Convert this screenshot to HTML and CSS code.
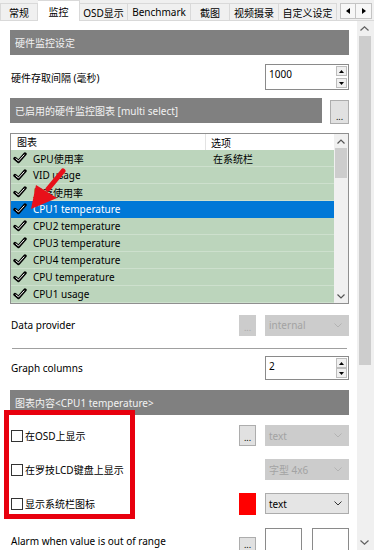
FILE: index.html
```html
<!DOCTYPE html>
<html>
<head>
<meta charset="utf-8">
<title>监控</title>
<link rel="stylesheet" href="styles.css">
</head>
<body>
<div class="window">
  <div class="tabs">
    <div class="tab first w1">常规</div>
    <div class="tab active w2">监控</div>
    <div class="tab w3">OSD显示</div>
    <div class="tab w4">Benchmark</div>
    <div class="tab w5">截图</div>
    <div class="tab w6">视频摄录</div>
    <div class="tab w7">自定义设定</div>
    <div class="tabnav">
      <span class="navbtn"><svg width="4" height="6"><path d="M4 0L0 3L4 6z"/></svg></span>
      <span class="navbtn"><svg width="4" height="6"><path d="M0 0L4 3L0 6z"/></svg></span>
    </div>
  </div>

  <div class="body">
    <div class="panel">
      <div class="group">硬件监控设定</div>

      <div class="row r-interval">
        <span class="label">硬件存取间隔 (毫秒)</span>
        <div class="spin big">
          <span class="val">1000</span>
          <div class="spinbtns">
            <span class="sbtn"><svg width="5" height="3"><path d="M0 3L2.5 0L5 3z"/></svg></span>
            <span class="sbtn"><svg width="5" height="3"><path d="M0 0L2.5 3L5 0z"/></svg></span>
          </div>
        </div>
      </div>

      <div class="row r-charts">
        <div class="group grow">已启用的硬件监控图表 [multi select]</div>
        <span class="btn tallbtn">...</span>
      </div>

      <div class="list">
        <div class="list-main">
          <div class="lhead"><span class="c1">图表</span><span class="c2">选项</span></div>
          <div class="item"><svg class="chk" width="14" height="12"><path d="M2 6.5L5.5 9.5L12 2" fill="none" stroke="#000" stroke-width="3.4" stroke-linejoin="round" stroke-linecap="round"/><path d="M2.6 6.6L5.5 9L11.4 2.6" fill="none" stroke="#fff" stroke-width="1"/></svg><span class="c1">GPU使用率</span><span class="c2">在系统栏</span></div>
          <div class="item"><svg class="chk" width="14" height="12"><path d="M2 6.5L5.5 9.5L12 2" fill="none" stroke="#000" stroke-width="3.4" stroke-linejoin="round" stroke-linecap="round"/><path d="M2.6 6.6L5.5 9L11.4 2.6" fill="none" stroke="#fff" stroke-width="1"/></svg><span class="c1">VID usage</span></div>
          <div class="item"><svg class="chk" width="14" height="12"><path d="M2 6.5L5.5 9.5L12 2" fill="none" stroke="#000" stroke-width="3.4" stroke-linejoin="round" stroke-linecap="round"/><path d="M2.6 6.6L5.5 9L11.4 2.6" fill="none" stroke="#fff" stroke-width="1"/></svg><span class="c1">显存使用率</span></div>
          <div class="item selected"><svg class="chk" width="14" height="12"><path d="M2 6.5L5.5 9.5L12 2" fill="none" stroke="#000" stroke-width="3.4" stroke-linejoin="round" stroke-linecap="round"/><path d="M2.6 6.6L5.5 9L11.4 2.6" fill="none" stroke="#fff" stroke-width="1"/></svg><span class="c1">CPU1 temperature</span></div>
          <div class="item"><svg class="chk" width="14" height="12"><path d="M2 6.5L5.5 9.5L12 2" fill="none" stroke="#000" stroke-width="3.4" stroke-linejoin="round" stroke-linecap="round"/><path d="M2.6 6.6L5.5 9L11.4 2.6" fill="none" stroke="#fff" stroke-width="1"/></svg><span class="c1">CPU2 temperature</span></div>
          <div class="item"><svg class="chk" width="14" height="12"><path d="M2 6.5L5.5 9.5L12 2" fill="none" stroke="#000" stroke-width="3.4" stroke-linejoin="round" stroke-linecap="round"/><path d="M2.6 6.6L5.5 9L11.4 2.6" fill="none" stroke="#fff" stroke-width="1"/></svg><span class="c1">CPU3 temperature</span></div>
          <div class="item"><svg class="chk" width="14" height="12"><path d="M2 6.5L5.5 9.5L12 2" fill="none" stroke="#000" stroke-width="3.4" stroke-linejoin="round" stroke-linecap="round"/><path d="M2.6 6.6L5.5 9L11.4 2.6" fill="none" stroke="#fff" stroke-width="1"/></svg><span class="c1">CPU4 temperature</span></div>
          <div class="item"><svg class="chk" width="14" height="12"><path d="M2 6.5L5.5 9.5L12 2" fill="none" stroke="#000" stroke-width="3.4" stroke-linejoin="round" stroke-linecap="round"/><path d="M2.6 6.6L5.5 9L11.4 2.6" fill="none" stroke="#fff" stroke-width="1"/></svg><span class="c1">CPU temperature</span></div>
          <div class="item"><svg class="chk" width="14" height="12"><path d="M2 6.5L5.5 9.5L12 2" fill="none" stroke="#000" stroke-width="3.4" stroke-linejoin="round" stroke-linecap="round"/><path d="M2.6 6.6L5.5 9L11.4 2.6" fill="none" stroke="#fff" stroke-width="1"/></svg><span class="c1">CPU1 usage</span></div>
        </div>
        <div class="lscroll">
          <span class="arr"><svg width="8" height="5"><path d="M0.5 4.5L4 1L7.5 4.5" fill="none" stroke="#555" stroke-width="1.2"/></svg></span>
          <div class="lthumb"></div>
          <div class="spacer"></div>
          <span class="arr"><svg width="8" height="5"><path d="M0.5 0.5L4 4L7.5 0.5" fill="none" stroke="#555" stroke-width="1.2"/></svg></span>
        </div>
      </div>

      <div class="row r-provider">
        <span class="label">Data provider</span>
        <div class="ctrls">
          <span class="btn disabled">...</span>
          <div class="select disabled"><span>internal</span><svg width="8" height="5"><path d="M0.5 0.5L4 4L7.5 0.5" fill="none" stroke="#b3b3b3" stroke-width="1"/></svg></div>
        </div>
      </div>

      <div class="sep"></div>

      <div class="row r-columns">
        <span class="label">Graph columns</span>
        <div class="spin">
          <span class="val">2</span>
          <div class="spinbtns">
            <span class="sbtn"><svg width="5" height="3"><path d="M0 3L2.5 0L5 3z"/></svg></span>
            <span class="sbtn"><svg width="5" height="3"><path d="M0 0L2.5 3L5 0z"/></svg></span>
          </div>
        </div>
      </div>

      <div class="group g3">图表内容&lt;CPU1 temperature&gt;</div>

      <div class="row r-osd">
        <label class="check"><span class="box"></span>在OSD上显示</label>
        <div class="ctrls">
          <span class="btn">...</span>
          <div class="select disabled"><span>text</span><svg width="8" height="5"><path d="M0.5 0.5L4 4L7.5 0.5" fill="none" stroke="#b3b3b3" stroke-width="1"/></svg></div>
        </div>
      </div>

      <div class="row r-lcd">
        <label class="check"><span class="box"></span>在罗技LCD键盘上显示</label>
        <div class="ctrls">
          <div class="select disabled"><span>字型 4x6</span><svg width="8" height="5"><path d="M0.5 0.5L4 4L7.5 0.5" fill="none" stroke="#b3b3b3" stroke-width="1"/></svg></div>
        </div>
      </div>

      <div class="row r-tray">
        <label class="check"><span class="box"></span>显示系统栏图标</label>
        <div class="ctrls">
          <span class="swatch"></span>
          <div class="select"><span>text</span><svg width="8" height="5"><path d="M0.5 0.5L4 4L7.5 0.5" fill="none" stroke="#333" stroke-width="1"/></svg></div>
        </div>
      </div>

      <div class="row r-alarm">
        <span class="label">Alarm when value is out of range</span>
        <div class="ctrls top">
          <span class="btn low">...</span>
          <span class="field"></span>
          <span class="field"></span>
        </div>
      </div>
    </div>

    <div class="vscroll">
      <span class="varr"><svg width="9" height="5"><path d="M0.5 4.5L4.5 0.8L8.5 4.5" fill="none" stroke="#606060" stroke-width="1.2"/></svg></span>
      <div class="vthumb"></div>
      <div class="spacer"></div>
      <span class="varr"><svg width="9" height="5"><path d="M0.5 0.5L4.5 4.2L8.5 0.5" fill="none" stroke="#606060" stroke-width="1.2"/></svg></span>
    </div>
  </div>
</div>

<svg class="pointer" width="40" height="46" viewBox="0 0 40 46">
  <path d="M37 3L22 21" stroke="#e8101a" stroke-width="5" stroke-linecap="round"/>
  <path d="M10 17L31 30L5 41z" fill="#e8101a"/>
</svg>
<div class="callout"></div>
</body>
</html>
```

FILE: styles.css
```css
html, body
{
	margin:0;
	padding:0;
}
body
{
	width:374px;
	height:550px;
	overflow:hidden;
	position:relative;
	background:#f0f0f0;
	font-family:"Noto Sans", "Noto Sans CJK SC", sans-serif;
	font-size:10px;
	color:#000;
}
.window
{
	display:flex;
	flex-direction:column;
	height:550px;
}

/* tab strip */
.tabs
{
	display:flex;
	align-items:flex-end;
	height:21px;
	flex-shrink:0;
}
.tab
{
	box-sizing:border-box;
	height:18px;
	display:flex;
	align-items:center;
	justify-content:center;
	background:#f0f0f0;
	border-top:1px solid #d9d9d9;
	border-right:1px solid #d9d9d9;
	border-bottom:1px solid #d9d9d9;
	white-space:nowrap;
}
.tab.first
{
	border-left:1px solid #d9d9d9;
}
.tab.active
{
	height:21px;
	background:#fff;
	border-bottom:none;
}
.w1 { width:38px; }
.w2 { width:42px; }
.w3 { width:48px; }
.w4 { width:63px; }
.w5 { width:39px; }
.w6 { width:49px; }
.w7 { width:58px; }
.tabnav
{
	flex:1;
	height:21px;
	box-sizing:border-box;
	display:flex;
	padding:3px 0 0 3px;
	border-bottom:1px solid #d9d9d9;
}
.navbtn
{
	box-sizing:border-box;
	width:16px;
	height:16px;
	border:1px solid #c4c4c4;
	background:#f7f7f7;
	display:flex;
	align-items:center;
	justify-content:center;
}
.navbtn + .navbtn
{
	border-left:none;
}

/* main area */
.body
{
	flex:1;
	display:flex;
	min-height:0;
}
.panel
{
	flex:1;
	background:#fff;
	padding:9px 8px 0 10px;
	display:flex;
	flex-direction:column;
	overflow:hidden;
}
.group
{
	height:25px;
	flex-shrink:0;
	background:#808080;
	color:#f2f2f2;
	padding-left:5px;
	display:flex;
	align-items:center;
	white-space:nowrap;
}
.grow
{
	flex:1;
}
.row
{
	display:flex;
	align-items:center;
	justify-content:space-between;
	flex-shrink:0;
}
.label
{
	padding-left:1px;
	white-space:nowrap;
}
.ctrls
{
	display:flex;
	align-items:center;
	gap:9px;
}
.ctrls.top
{
	align-self:flex-start;
	align-items:flex-start;
}

.r-interval { margin-top:9px; height:26px; }
.r-charts { margin-top:8px; height:26px; align-items:flex-start; gap:8px; }
.r-provider { margin-top:11px; height:20px; }
.r-columns { margin-top:7px; height:24px; }
.g3 { margin-top:10px; }
.r-osd { margin-top:10px; height:21px; }
.r-lcd { margin-top:13px; height:21px; }
.r-tray { margin-top:13px; height:21px; }
.r-alarm { margin-top:14px; height:26px; }

/* buttons and inputs */
.btn
{
	box-sizing:border-box;
	width:17px;
	height:21px;
	background:#e1e1e1;
	border:1px solid #adadad;
	display:flex;
	align-items:center;
	justify-content:center;
	padding-top:4px;
	font-size:9px;
	line-height:9px;
}
.btn.tallbtn
{
	width:19px;
	height:24px;
	margin-top:2px;
	padding-top:8px;
}
.btn.disabled
{
	background:#cccccc;
	border-color:#cccccc;
	color:#a8a8a8;
}
.btn.low
{
	margin-top:9px;
	align-items:flex-start;
	padding-top:2px;
}
.select
{
	box-sizing:border-box;
	width:84px;
	height:21px;
	background:#e5e5e5;
	border:1px solid #acacac;
	display:flex;
	align-items:center;
	justify-content:space-between;
	padding:0 6px 0 3px;
}
.select.disabled
{
	background:#cccccc;
	border-color:#cccccc;
	color:#a3a3a3;
}
.swatch
{
	width:17px;
	height:22px;
	background:#ff0000;
}
.field
{
	box-sizing:border-box;
	width:37px;
	height:26px;
	border:1px solid #8a8a8a;
	background:#fff;
}
.field + .field
{
	margin-left:1px;
}
.spin
{
	box-sizing:border-box;
	width:84px;
	height:24px;
	border:1px solid #8a8a8a;
	background:#fff;
	display:flex;
	justify-content:space-between;
	padding:1px 1px 1px 3px;
}
.spin.big
{
	height:26px;
}
.spin .val
{
	line-height:13px;
	padding-top:2px;
}
.spinbtns
{
	display:flex;
	flex-direction:column;
	justify-content:space-between;
	width:11px;
}
.sbtn
{
	box-sizing:border-box;
	height:10px;
	border:1px solid #bdbdbd;
	background:#f0f0f0;
	display:flex;
	align-items:center;
	justify-content:center;
}

/* chart list */
.list
{
	margin-top:9px;
	height:171px;
	box-sizing:border-box;
	border:1px solid #8f8f8f;
	display:flex;
	flex-shrink:0;
}
.list-main
{
	flex:1;
	display:flex;
	flex-direction:column;
	overflow:hidden;
}
.lhead
{
	height:16px;
	flex-shrink:0;
	display:flex;
	align-items:center;
	background:#fff;
}
.lhead .c1
{
	width:188px;
	padding-left:6px;
	border-right:1px solid #e3e3e3;
	height:16px;
	line-height:16px;
}
.lhead .c2
{
	padding-left:5px;
}
.item
{
	box-sizing:border-box;
	height:17px;
	flex-shrink:0;
	display:flex;
	align-items:center;
	padding-left:2px;
	background:#bcd5bc;
	border-bottom:1px solid #cde0cd;
	white-space:nowrap;
}
.item.selected
{
	background:#0078d7;
	border-bottom-color:#0078d7;
	color:#fff;
}
.chk
{
	flex-shrink:0;
	margin-right:6px;
}
.item .c1
{
	width:172px;
}
.item .c2
{
	padding-left:8px;
}
.lscroll
{
	width:14px;
	background:#f0f0f0;
	display:flex;
	flex-direction:column;
	align-items:center;
}
.arr
{
	height:14px;
	display:flex;
	align-items:center;
	justify-content:center;
}
.lthumb
{
	width:12px;
	height:30px;
	background:#cdcdcd;
}
.spacer
{
	flex:1;
}
.sep
{
	margin-top:13px;
	height:1px;
	background:#a0a0a0;
	margin-left:2px;
	margin-right:2px;
	flex-shrink:0;
}
.check
{
	display:flex;
	align-items:center;
	gap:2px;
	margin-left:1px;
	white-space:nowrap;
}
.box
{
	box-sizing:border-box;
	width:12px;
	height:12px;
	border:1px solid #333;
	background:#fff;
}

/* outer scrollbar */
.vscroll
{
	width:17px;
	background:#f0f0f0;
	display:flex;
	flex-direction:column;
	align-items:center;
	padding-right:2px;
	box-sizing:border-box;
}
.varr
{
	height:15px;
	display:flex;
	align-items:center;
	justify-content:center;
}
.vthumb
{
	width:12px;
	height:329px;
	background:#cdcdcd;
}

/* red annotations drawn over the screenshot */
.pointer
{
	position:absolute;
	left:26px;
	top:168px;
}
.callout
{
	position:absolute;
	left:4px;
	top:410px;
	width:131px;
	height:109px;
	box-sizing:border-box;
	border:5px solid #e8000e;
}
```
